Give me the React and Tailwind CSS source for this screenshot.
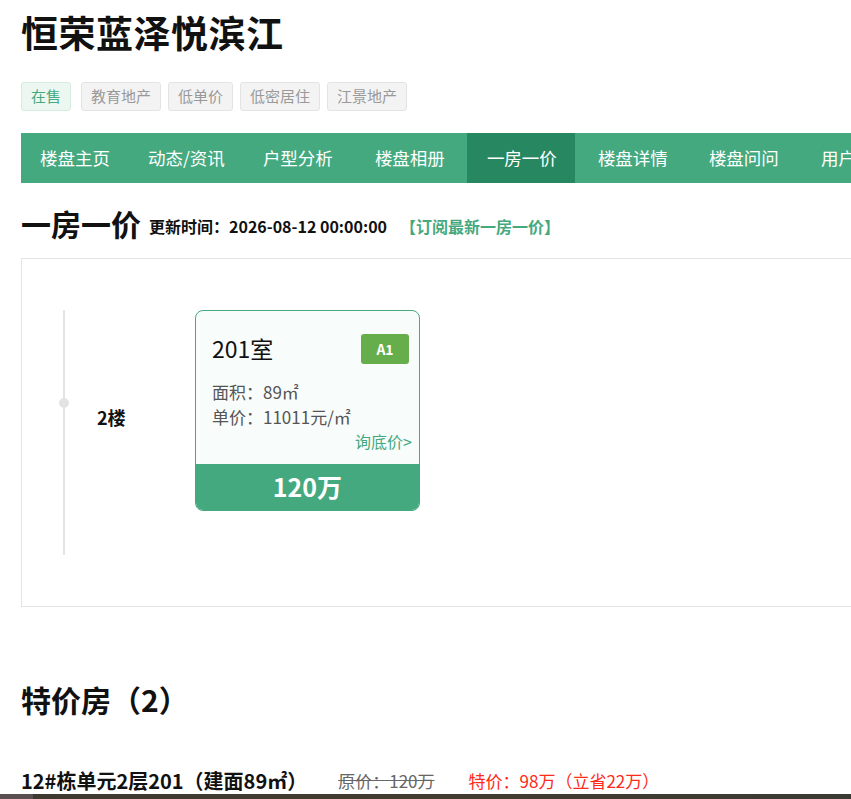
const tags = [
  { text: "在售", on: true },
  { text: "教育地产" },
  { text: "低单价" },
  { text: "低密居住" },
  { text: "江景地产" },
];

// nav labels with their own horizontal padding
const navs = [
  { text: "楼盘主页", pad: "pl-[19px] pr-[18px]" },
  { text: "动态/资讯", pad: "pl-[20px] pr-[19px]" },
  { text: "户型分析", pad: "pl-[19px] pr-[21px]" },
  { text: "楼盘相册", pad: "pl-[21px] pr-[22px]" },
  { text: "一房一价", pad: "pl-[20px] pr-[18px]", active: true },
  { text: "楼盘详情", pad: "pl-[23px] pr-[20px]" },
  { text: "楼盘问问", pad: "pl-[21px] pr-[21px]" },
  { text: "用户点评", pad: "pl-[21px] pr-[21px]" },
  { text: "周边配套", pad: "pl-[21px] pr-[21px]" },
];

const font = { fontFamily: '"Noto Sans CJK SC", "Noto Sans", sans-serif' };

export default function App() {
  return (
    <div className="w-full min-h-screen overflow-hidden bg-white text-[#111]" style={font}>
      <div className="w-[1200px] pl-[21px]">
        {/* Title */}
        <h1 className="pt-[7px] text-[37px] font-bold leading-[50px] tracking-[0.5px]">恒荣蓝泽悦滨江</h1>

        {/* Tags */}
        <div className="mt-[25px] flex gap-[7px]">
          {tags.map((t) => (
            <span
              key={t.text}
              className={
                t.on
                  ? "mr-[3px] h-[29px] w-[50px] justify-center flex items-center rounded-[3px] border border-[#d5ede0] bg-[#ebf7f0] text-[15px] text-[#45a97f]"
                  : "h-[29px] px-[9px] flex items-center rounded-[3px] border border-[#e3e3e3] bg-[#f3f3f3] text-[15px] text-[#999]"
              }
            >
              {t.text}
            </span>
          ))}
        </div>

        {/* Nav bar */}
        <div className="mt-[22px] flex h-[50px] bg-[#45a97f]">
          {navs.map((n) => (
            <div
              key={n.text}
              className={`flex items-center text-[17.5px] text-white ${n.pad} ${n.active ? "bg-[#268760]" : ""}`}
            >
              {n.text}
            </div>
          ))}
        </div>

        {/* One room one price */}
        <div className="mt-[20px] flex items-end gap-[8px]">
          <h2 className="text-[30px] font-bold leading-[40px]">一房一价</h2>
          <span className="mb-[5px] text-[16px] font-bold">更新时间：2026-08-12 00:00:00</span>
          <span className="mb-[5px] ml-[5px] text-[16px] font-bold text-[#45a97f]">【订阅最新一房一价】</span>
        </div>

        <div className="mt-[15px] border border-[#e3e3e3] py-[51px] pl-[41px]">
          <div className="flex items-start">
            {/* timeline */}
            <div className="relative h-[245px] w-[2px] bg-[#e3e3e3]">
              <div className="absolute left-[-4px] top-[88px] h-[10px] w-[10px] rounded-full bg-[#e3e3e3]" />
            </div>
            <div className="ml-[32px] mt-[94px] w-[98px] text-[18px] font-bold">2楼</div>

            {/* room card */}
            <div className="w-[225px] h-[201px] overflow-hidden rounded-[8px] border border-[#45a97f] bg-[#f8fcfa] flex flex-col">
              <div className="flex-1 pl-[16px] pr-[10px] pt-[23px]">
                <div className="flex items-start justify-between">
                  <span className="-mt-[1px] text-[23px] leading-[30px]">201室</span>
                  <span className="flex h-[30px] w-[48px] items-center justify-center rounded-[3px] bg-[#66ae4c] text-[14px] font-bold text-white">
                    A1
                  </span>
                </div>
                <div className="mt-[15px] text-[17px] leading-[25px] text-[#555]">
                  <p>面积：89㎡</p>
                  <p>单价：11011元/㎡</p>
                </div>
                <p className="-mr-[3px] text-right text-[16px] leading-[24px] text-[#45a97f]">询底价&gt;</p>
              </div>
              <div className="flex h-[46px] items-center justify-center bg-[#45a97f] text-[25px] font-bold text-white">
                120万
              </div>
            </div>
          </div>
        </div>

        {/* Special offers */}
        <h2 className="mt-[72px] text-[30px] font-bold leading-[40px]">特价房（2）</h2>

        <div className="mt-[49px] flex items-center text-[17px] leading-[26px]">
          <span className="font-bold text-[20px]">12#栋单元2层201（建面89㎡）</span>
          <span className="ml-[31px] text-[#666] line-through">原价：120万</span>
          <span className="ml-[34px] text-[#ff2a1a]">特价：98万（立省22万）</span>
        </div>
      </div>

      {/* footer band */}
      <div className="flex h-[40px]">
        <div className="w-[33px] bg-[#5a5052]" />
        <div className="flex-1 bg-gradient-to-r from-[#3e3a30] via-[#433c30] to-[#3a3a34]" />
      </div>
    </div>
  );
}
